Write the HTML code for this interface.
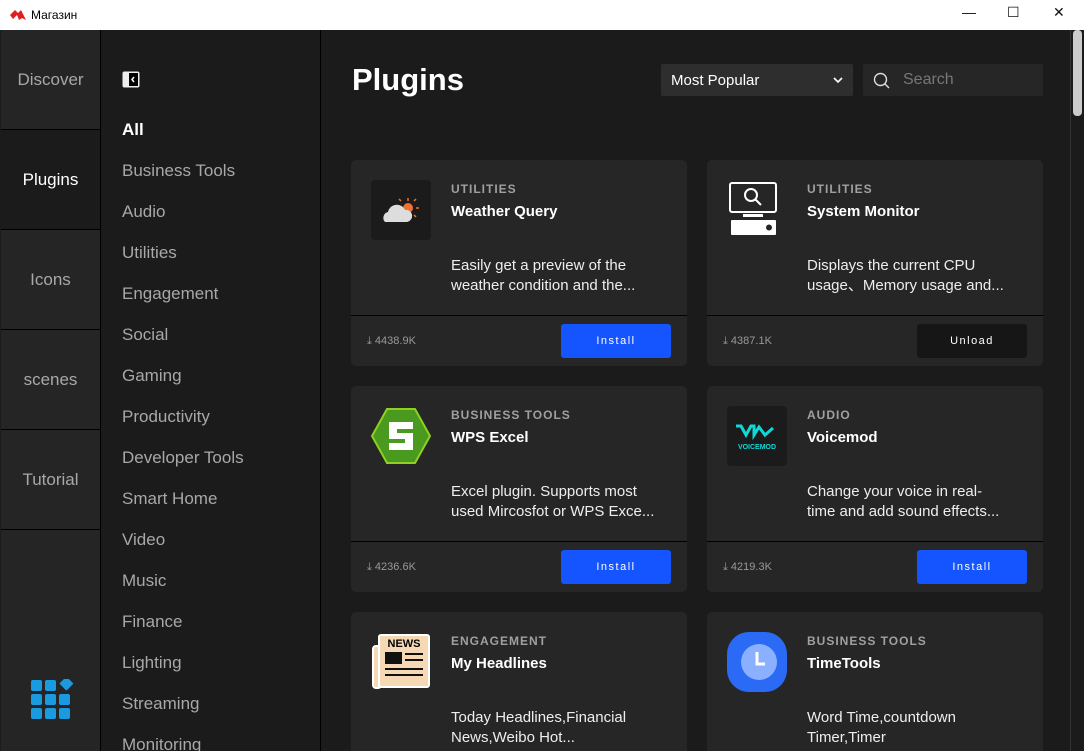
<!DOCTYPE html>
<html><head><meta charset="utf-8"><style>
*{margin:0;padding:0;box-sizing:border-box}
html,body{width:1084px;height:751px;overflow:hidden}
body{background:#1b1b1b;font-family:"Liberation Sans",sans-serif;position:relative}
.tb{position:absolute;left:0;top:0;width:1084px;height:30px;background:#fff;color:#000;font-size:12px}
.tb .t{position:absolute;left:31px;top:8px}
.tb .c{position:absolute;top:4px;font-size:14px;color:#111}
.rail{position:absolute;left:1px;top:30px;width:100px;height:721px;background:#252525;border-right:1px solid #000;overflow:hidden}
.rail div{height:100px;border-bottom:1px solid #000;color:#a8a8a8;font-size:17px;text-align:center;line-height:99px}
.rail div.sel{background:#1b1b1b;color:#fff}
.cat{position:absolute;left:102px;top:30px;width:219px;height:721px;background:#1b1b1b;border-right:1px solid #000;overflow:hidden}
.cat p{position:absolute;left:20px;color:#a8a8a8;font-size:17px}
.main{position:absolute;left:322px;top:30px;width:748px;height:721px;background:#1b1b1b;overflow:hidden}
h1{position:absolute;left:30px;top:32px;color:#fff;font-size:31px;font-weight:bold}
.dd{position:absolute;left:339px;top:34px;width:192px;height:32px;background:#2e2e2e;color:#fff;font-size:15px;padding:8px 10px;border-radius:2px}
.sr{position:absolute;left:541px;top:34px;width:180px;height:32px;background:#262626;color:#777;font-size:16px;padding:7px 0 0 40px;border-radius:2px}
.card{position:absolute;width:336px;height:206px;background:#262626;border-radius:5px}
.card .ic{position:absolute;left:20px;top:20px;width:60px;height:60px;border-radius:4px}
.card .k{position:absolute;left:100px;top:22px;color:#a0a0a0;font-size:12px;font-weight:bold;letter-spacing:1px}
.card .n{position:absolute;left:100px;top:43px;color:#fff;font-size:15px;font-weight:bold}
.card .d{position:absolute;left:100px;top:96px;color:#eee;font-size:15px;line-height:20px;width:212px}
.card .ln{position:absolute;left:0;top:155px;width:336px;height:1px;background:#000}
.card .dl{position:absolute;left:16px;top:175px;color:#999;font-size:11px}
.card .b{position:absolute;left:210px;top:164px;width:110px;height:34px;border-radius:3px;background:#1455ff;color:#fff;font-size:11px;letter-spacing:1.5px;text-align:center;line-height:34px}
.card .b.u{background:#161616}
.sb{position:absolute;left:1070px;top:30px;width:14px;height:721px;background:#1b1b1b;border-left:1px solid #333}
</style></head><body>
<div class="tb"><svg style="position:absolute;left:9px;top:9px" width="18" height="12"><path d="M1 6 L6 1 L9 4 L12 1 L17 11 L13 9 L10 11 L8 6 L4 10Z" fill="#e02020"/></svg><span class="t">Магазин</span>
<span class="c" style="left:962px">—</span><span class="c" style="left:1007px">☐</span><span class="c" style="left:1053px">✕</span></div>
<div class="rail"><div>Discover</div><div class="sel">Plugins</div><div>Icons</div><div>scenes</div><div>Tutorial</div>
<svg style="position:absolute;left:29px;top:649px" width="44" height="42"><g fill="#1a9ae0"><rect x="1" y="1" width="11" height="11" rx="2"/><rect x="15" y="1" width="11" height="11" rx="2"/><rect x="30" y="-1" width="10" height="10" rx="1" transform="rotate(45 35 6)"/><rect x="1" y="15" width="11" height="11" rx="2"/><rect x="15" y="15" width="11" height="11" rx="2"/><rect x="29" y="15" width="11" height="11" rx="2"/><rect x="1" y="29" width="11" height="11" rx="2"/><rect x="15" y="29" width="11" height="11" rx="2"/><rect x="29" y="29" width="11" height="11" rx="2"/></g></svg></div>
<div class="cat">
<svg style="position:absolute;left:20px;top:41px" width="18" height="17"><rect x="0.5" y="0.5" width="17" height="16" rx="2" fill="#eee"/><rect x="7" y="2" width="9" height="13" fill="#000"/><path d="M12 6 L10 8.5 L12 11" stroke="#fff" fill="none" stroke-width="1.5"/></svg>
<p style="top:90px;color:#fff;font-weight:bold">All</p>
<p style="top:131px">Business Tools</p><p style="top:172px">Audio</p><p style="top:213px">Utilities</p><p style="top:254px">Engagement</p><p style="top:295px">Social</p><p style="top:336px">Gaming</p><p style="top:377px">Productivity</p><p style="top:418px">Developer Tools</p><p style="top:459px">Smart Home</p><p style="top:500px">Video</p><p style="top:541px">Music</p><p style="top:582px">Finance</p><p style="top:623px">Lighting</p><p style="top:664px">Streaming</p><p style="top:705px">Monitoring</p>
</div>
<div class="main">
<h1>Plugins</h1>
<div class="dd">Most Popular<svg style="position:absolute;right:10px;top:13px" width="10" height="7"><path d="M1 1 L5 5 L9 1" stroke="#fff" stroke-width="1.6" fill="none"/></svg></div>
<div class="sr"><svg style="position:absolute;left:10px;top:8px" width="18" height="18"><circle cx="7.5" cy="7.5" r="6" stroke="#ddd" stroke-width="1.4" fill="none"/><path d="M12 12 L16 16" stroke="#ddd" stroke-width="1.4"/></svg>Search</div>

<div class="card" style="left:29px;top:130px"><div class="ic" style="background:#1b1b1b"><svg width="60" height="60"><circle cx="37" cy="28" r="5" fill="#f07030"/><g stroke="#f07030" stroke-width="1.5"><path d="M37 18v3M45 28h3M43 21l2-2M43 35l2 2M30 21l-2-2"/></g><path d="M14 42 a6 6 0 0 1 3-10 a9 9 0 0 1 17-2 a6 6 0 0 1 2 12z" fill="#ddd"/></svg></div><div class="k">UTILITIES</div><div class="n">Weather Query</div><div class="d">Easily get a preview of the weather condition and the...</div><div class="ln"></div><div class="dl">⤓ 4438.9K</div><div class="b">Install</div></div>

<div class="card" style="left:385px;top:130px"><div class="ic"><svg width="60" height="60"><rect x="3" y="3" width="46" height="29" rx="2" stroke="#fff" stroke-width="2" fill="none"/><circle cx="24" cy="15" r="6" stroke="#fff" stroke-width="2" fill="none"/><path d="M28 19l6 6" stroke="#fff" stroke-width="2"/><rect x="16" y="34" width="20" height="3" fill="#fff"/><rect x="4" y="40" width="45" height="15" rx="1" fill="#fff"/><circle cx="42" cy="47.5" r="3" fill="#262626"/></svg></div><div class="k">UTILITIES</div><div class="n">System Monitor</div><div class="d">Displays the current CPU usage、Memory usage and...</div><div class="ln"></div><div class="dl">⤓ 4387.1K</div><div class="b u">Unload</div></div>

<div class="card" style="left:29px;top:356px"><div class="ic"><svg width="60" height="60"><polygon points="16,3 44,3 59,30 44,57 16,57 1,30" fill="#4a9a20" stroke="#8fd020" stroke-width="2"/><path d="M18 16h24v7H26v4h16v17H18v-7h16v-4H18z" fill="#fff"/></svg></div><div class="k">BUSINESS TOOLS</div><div class="n">WPS Excel</div><div class="d">Excel plugin. Supports most used Mircosfot or WPS Exce...</div><div class="ln"></div><div class="dl">⤓ 4236.6K</div><div class="b">Install</div></div>

<div class="card" style="left:385px;top:356px"><div class="ic" style="background:#1b1b1b"><svg width="60" height="60"><path d="M9 20h5l5 9 5-9h3v9l5-8 6 8 8-7" stroke="#10d8d8" stroke-width="3" fill="none"/><text x="30" y="43" font-size="7" fill="#10d8d8" text-anchor="middle" font-family="Liberation Sans" font-weight="bold">VOICEMOD</text></svg></div><div class="k">AUDIO</div><div class="n">Voicemod</div><div class="d" style="width:200px">Change your voice in real-time and add sound effects...</div><div class="ln"></div><div class="dl">⤓ 4219.3K</div><div class="b">Install</div></div>

<div class="card" style="left:29px;top:582px"><div class="ic"><svg width="60" height="60"><rect x="2" y="14" width="8" height="42" rx="3" fill="#f5d9b5" stroke="#fff" stroke-width="2"/><rect x="8" y="3" width="50" height="52" rx="2" fill="#f5d9b5" stroke="#fff" stroke-width="2"/><text x="33" y="15" font-size="11" font-weight="bold" text-anchor="middle" font-family="Liberation Sans">NEWS</text><rect x="14" y="20" width="17" height="12" fill="#111"/><rect x="34" y="21" width="18" height="2" fill="#111"/><rect x="34" y="27" width="18" height="2" fill="#111"/><rect x="14" y="36" width="38" height="2" fill="#111"/><rect x="14" y="42" width="38" height="2" fill="#111"/></svg></div><div class="k">ENGAGEMENT</div><div class="n">My Headlines</div><div class="d">Today Headlines,Financial News,Weibo Hot...</div></div>

<div class="card" style="left:385px;top:582px"><div class="ic" style="background:#2a6af5;border-radius:22px"><svg width="60" height="60"><circle cx="32" cy="30" r="18" fill="#8ab0ff"/><path d="M30 20v12h8" stroke="#fff" stroke-width="3" fill="none"/></svg></div><div class="k">BUSINESS TOOLS</div><div class="n">TimeTools</div><div class="d">Word Time,countdown Timer,Timer</div></div>
</div>
<div class="sb"><div style="position:absolute;left:2px;top:0;width:9px;height:86px;background:#ccc;border-radius:4px"></div></div>
</body></html>
